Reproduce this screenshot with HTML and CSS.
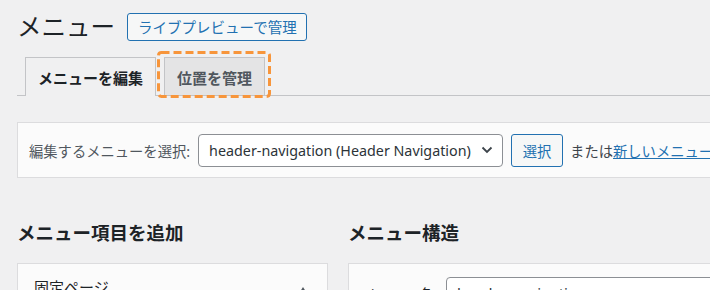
FILE: index.html
```html
<!DOCTYPE html>
<html lang="ja">
<head>
<meta charset="utf-8">
<title>メニュー</title>
<link rel="stylesheet" href="styles.css">
</head>
<body>
<div class="wrap">
  <div class="page-head">
    <h1 class="page-title">メニュー</h1>
    <a class="btn-outline">ライブプレビューで管理</a>
  </div>

  <div class="tabs">
    <a class="tab tab-active">メニューを編集</a>
    <a class="tab tab-inactive">位置を管理
      <svg class="highlight" width="114" height="47" viewBox="0 0 114 47">
        <rect x="1.5" y="1.5" width="111" height="44" rx="3" ry="3" fill="none" stroke="#f7953b" stroke-width="3" stroke-dasharray="8 4"/>
      </svg>
    </a>
  </div>

  <div class="manage">
    <span class="manage-label">編集するメニューを選択:</span>
    <div class="select">
      <span class="select-text">header-navigation (Header Navigation)</span>
      <svg class="chevron" width="12" height="8" viewBox="0 0 12 8"><path d="M1.5 1.5 L6 6 L10.5 1.5" fill="none" stroke="#3c434a" stroke-width="1.8"/></svg>
    </div>
    <a class="btn-small">選択</a>
    <span class="manage-or">または<a class="link">新しいメニューを作成しましょう。</a></span>
  </div>

  <div class="columns">
    <div class="col-left">
      <h2 class="section-title">メニュー項目を追加</h2>
      <div class="panel">
        <div class="panel-row">
          <span class="panel-title">固定ページ</span>
          <svg class="arrow" width="10" height="8" viewBox="0 0 10 8"><path d="M5 0 L10 8 L0 8 Z" fill="#50575e"/></svg>
        </div>
      </div>
    </div>
    <div class="col-right">
      <h2 class="section-title">メニュー構造</h2>
      <div class="panel panel-right">
        <div class="name-row">
          <span class="name-label">メニュー名</span>
          <div class="name-input">header-navigation</div>
        </div>
      </div>
    </div>
  </div>
</div>
</body>
</html>
```

FILE: styles.css
```css
html, body {
  margin: 0;
  padding: 0;
}
body {
  width: 710px;
  height: 290px;
  overflow: hidden;
  background: #f0f0f1;
  font-family: "Noto Sans", "Noto Sans CJK JP", sans-serif;
  color: #3c434a;
  font-size: 14.3px;
}
.wrap {
  padding: 12px 0 0 17px;
}
.page-head {
  display: flex;
  align-items: center;
  gap: 12px;
  height: 30px;
}
.page-title {
  margin: 0;
  font-size: 24.5px;
  font-weight: 400;
  line-height: 30px;
  color: #1d2327;
}
.btn-outline {
  display: flex;
  align-items: center;
  box-sizing: border-box;
  height: 28px;
  padding: 0 9px 0 10px;
  border: 1px solid #2271b1;
  border-radius: 3px;
  background: #f6f7f7;
  color: #2271b1;
  font-size: 14.5px;
  line-height: 26px;
}
.tabs {
  display: flex;
  align-items: flex-start;
  gap: 8px;
  margin-top: 15px;
  padding-left: 8px;
  height: 38px;
  border-bottom: 1px solid #c3c4c7;
}
.tab {
  position: relative;
  box-sizing: border-box;
  height: 38px;
  padding: 2px 12px 0;
  border: 1px solid #c3c4c7;
  border-bottom: none;
  font-size: 15px;
  font-weight: 700;
  line-height: 36px;
}
.tab-active {
  height: 39px;
  background: #f0f0f1;
  color: #1d2327;
}
.tab-inactive {
  background: #e4e4e5;
  color: #50575e;
}
.highlight {
  position: absolute;
  left: -8px;
  top: -7px;
}
.manage {
  display: flex;
  align-items: center;
  box-sizing: border-box;
  width: 760px;
  height: 56px;
  margin-top: 26px;
  padding: 0 11px;
  border: 1px solid #dcdcde;
  background: #fbfbfb;
  white-space: nowrap;
}
.manage > * {
  flex: none;
}
.manage-label {
  color: #50575e;
  margin-right: 8px;
}
.select {
  display: flex;
  align-items: center;
  justify-content: space-between;
  box-sizing: border-box;
  width: 305px;
  height: 33px;
  padding: 0 9px 0 10px;
  border: 1px solid #8c8f94;
  border-radius: 4px;
  background: #fff;
}
.select-text {
  font-size: 14.3px;
  color: #2c3338;
}
.btn-small {
  display: flex;
  align-items: center;
  justify-content: center;
  box-sizing: border-box;
  width: 52px;
  height: 33px;
  margin-left: 8px;
  border: 1px solid #2271b1;
  border-radius: 3px;
  background: #f6f7f7;
  color: #2271b1;
}
.manage-or {
  margin-left: 7px;
  color: #3c434a;
}
.link {
  color: #2271b1;
  text-decoration: underline;
}
.columns {
  display: flex;
  gap: 20px;
  margin-top: 42px;
}
.col-left {
  width: 311px;
  flex: none;
}
.col-right {
  flex: 1;
}
.section-title {
  margin: 0 0 17px;
  font-size: 18.5px;
  font-weight: 700;
  line-height: 26px;
  color: #1d2327;
}
.panel {
  box-sizing: border-box;
  height: 60px;
  border: 1px solid #dcdcde;
  background: #fbfbfb;
}
.panel-right {
  width: 400px;
}
.panel-row {
  display: flex;
  align-items: center;
  justify-content: space-between;
  padding: 12px 19px 0 16px;
  height: 22px;
}
.panel-title {
  font-size: 15px;
  line-height: 22px;
  color: #1d2327;
}
.arrow {
  margin-top: 8px;
}
.name-row {
  display: flex;
  align-items: center;
  gap: 12px;
  padding: 13px 0 0 13px;
}
.name-label {
  width: 72px;
  font-size: 14.3px;
  color: #1d2327;
}
.name-input {
  box-sizing: border-box;
  width: 300px;
  height: 32px;
  padding: 0 10px;
  border: 1px solid #8c8f94;
  border-radius: 4px;
  background: #fff;
  font-size: 15px;
  line-height: 30px;
  color: #2c3338;
}
```
